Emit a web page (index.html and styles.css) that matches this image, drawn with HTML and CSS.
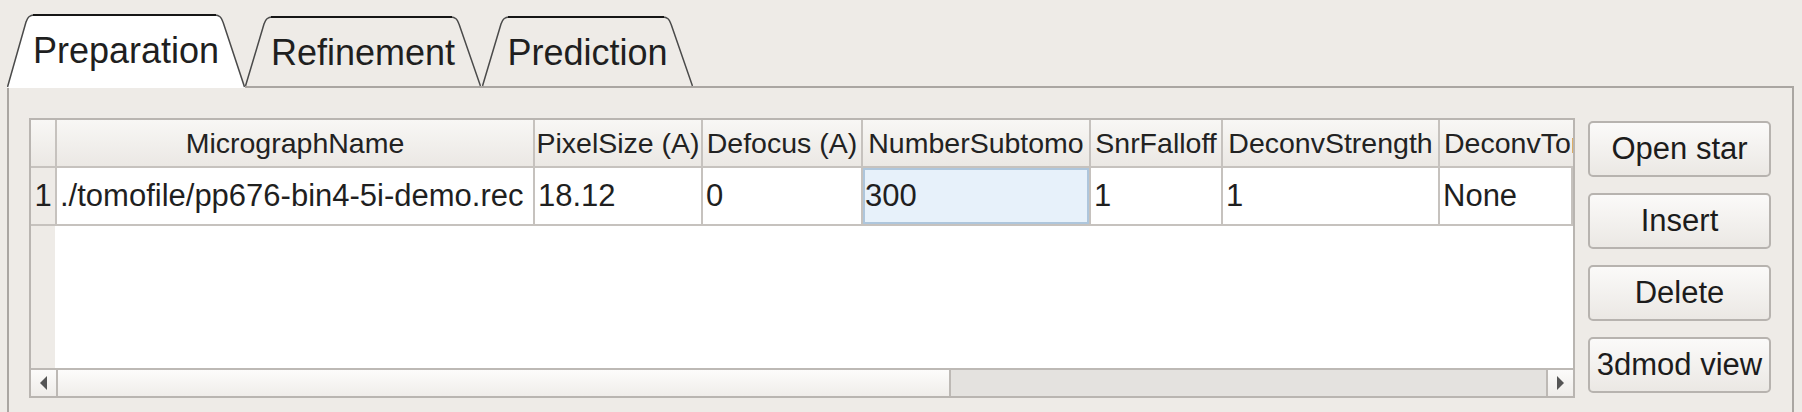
FILE: index.html
```html
<!DOCTYPE html>
<html>
<head>
<meta charset="utf-8">
<title>Preparation</title>
<link rel="stylesheet" href="styles.css">
</head>
<body>
<div class="tabbar">
  <div class="tab tab-prep">
    <svg class="tab-shape" width="238" height="74" viewBox="0 0 238 74">
      <path class="fill-sel" d="M0,74 L0.5,72 L19,8 Q21,1 27,1 L208,1 Q214,1 216,8 L237.5,72 L238,74 Z"/>
      <path class="edge" d="M0.5,73 L19,8 Q21,1 27,1 L208,1 Q214,1 216,8 L237.5,73"/>
      <path class="edge-top" d="M26,1 L209,1"/>
    </svg>
    <span class="tab-label">Preparation</span>
  </div>
  <div class="tab tab-ref">
    <svg class="tab-shape" width="236" height="74" viewBox="0 0 236 74">
      <path class="fill" d="M0.5,72 L19,10 Q21,3 27,3 L206,3 Q212,3 214,10 L235.5,72 Z"/>
      <path class="edge" d="M0.5,72 L19,10 Q21,3 27,3 L206,3 Q212,3 214,10 L235.5,72"/>
      <path class="edge-top" d="M26,3 L207,3"/>
    </svg>
    <span class="tab-label tab-label-low">Refinement</span>
  </div>
  <div class="tab tab-pred">
    <svg class="tab-shape" width="211" height="74" viewBox="0 0 211 74">
      <path class="fill" d="M0.5,72 L19,10 Q21,3 27,3 L181,3 Q187,3 189,10 L210.5,72 Z"/>
      <path class="edge" d="M0.5,72 L19,10 Q21,3 27,3 L181,3 Q187,3 189,10 L210.5,72"/>
      <path class="edge-top" d="M26,3 L182,3"/>
    </svg>
    <span class="tab-label tab-label-low">Prediction</span>
  </div>
</div>
<div class="pane">
  <div class="table">
    <div class="viewport">
      <div class="grid">
        <div class="hcell"></div>
        <div class="hcell">MicrographName</div>
        <div class="hcell">PixelSize (A)</div>
        <div class="hcell">Defocus (A)</div>
        <div class="hcell">NumberSubtomo</div>
        <div class="hcell">SnrFalloff</div>
        <div class="hcell">DeconvStrength</div>
        <div class="hcell hcell-clip">DeconvTomoName</div>

        <div class="vcell">1</div>
        <div class="cell">./tomofile/pp676-bin4-5i-demo.rec</div>
        <div class="cell">18.12</div>
        <div class="cell">0</div>
        <div class="cell cell-edit">300</div>
        <div class="cell">1</div>
        <div class="cell">1</div>
        <div class="cell">None</div>
      </div>
    </div>
    <div class="hscroll">
      <div class="sb-btn sb-left">
        <svg width="7" height="14" viewBox="0 0 7 14"><path class="arrow" d="M7,0 L7,14 L0,7 Z"/></svg>
      </div>
      <div class="sb-handle"></div>
      <div class="sb-trough"></div>
      <div class="sb-btn sb-right">
        <svg width="7" height="14" viewBox="0 0 7 14"><path class="arrow" d="M0,0 L0,14 L7,7 Z"/></svg>
      </div>
    </div>
  </div>
  <div class="buttons">
    <button class="btn" type="button">Open star</button>
    <button class="btn" type="button">Insert</button>
    <button class="btn" type="button">Delete</button>
    <button class="btn" type="button">3dmod view</button>
  </div>
</div>
</body>
</html>
```
FILE: styles.css
```css
html, body {
  margin: 0;
  padding: 0;
}
html {
  background: #eeebe7;
  overflow: hidden;
}
body {
  width: 1802px;
  height: 412px;
  overflow: hidden;
  box-sizing: border-box;
  padding: 14px 0 0 7px;
  font-family: "Liberation Sans", Arial, sans-serif;
  color: #1f1f1f;
}

/* Tabs */
.tabbar {
  display: flex;
  height: 74px;
  margin-bottom: -2px;
  position: relative;
  z-index: 1;
}
.tab {
  position: relative;
  height: 74px;
  display: flex;
  align-items: center;
  justify-content: center;
  font-size: 36px;
  flex: none;
}
.tab-prep { width: 238px; }
.tab-ref { width: 236px; }
.tab-pred { width: 211px; margin-left: 1px; }
.tab-shape {
  position: absolute;
  left: 0;
  top: 0;
}
.tab-label {
  position: relative;
  padding-bottom: 1px;
  white-space: nowrap;
}
.tab-label-low {
  padding-top: 4px;
  padding-bottom: 0;
}
.fill-sel { fill: #ffffff; }
.fill { fill: #eeebe7; }
.edge {
  fill: none;
  stroke: #4a4a4a;
  stroke-width: 1.5;
}
.edge-top {
  fill: none;
  stroke: #161616;
  stroke-width: 2;
}

/* Pane */
.pane {
  display: flex;
  align-items: flex-start;
  gap: 13px;
  width: 1787px;
  height: 340px;
  box-sizing: border-box;
  border: 2px solid #aaa6a2;
  border-bottom: none;
  padding: 30px 21px 0 20px;
}

/* Table */
.table {
  flex: none;
  width: 1546px;
  height: 280px;
  box-sizing: border-box;
  border: 2px solid #b9b5b1;
  background: #ffffff;
  display: flex;
  flex-direction: column;
  overflow: hidden;
}
.viewport {
  flex: 1;
  overflow: hidden;
  background: linear-gradient(to right, #eeebe7 24px, #ffffff 24px);
}
.grid {
  display: grid;
  grid-template-columns: 26px 478px 168px 160px 228px 132px 217px 133px;
  grid-template-rows: 48px 58px;
  width: max-content;
}
.hcell, .vcell, .cell {
  box-sizing: border-box;
  border-right: 2px solid #c6c2be;
  border-bottom: 2px solid #c6c2be;
  display: flex;
  align-items: center;
  white-space: nowrap;
  overflow: hidden;
}
.hcell {
  justify-content: center;
  font-size: 28.5px;
  color: #222222;
  background: linear-gradient(#f8f7f5, #ebe8e4);
}
.hcell-clip {
  justify-content: flex-start;
  padding-left: 4px;
  border-right: none;
}
.vcell {
  justify-content: center;
  font-size: 31px;
  background: #eeebe7;
}
.cell {
  font-size: 31px;
  padding-left: 3px;
  background: #ffffff;
}
.cell-edit {
  padding-left: 2px;
  background: #e7f1fa;
  box-shadow: inset 0 0 0 2px #aec6dc;
}

/* Scrollbar */
.hscroll {
  flex: none;
  display: flex;
  height: 28px;
  box-sizing: border-box;
  border-top: 2px solid #bdb9b5;
}
.sb-btn {
  flex: none;
  width: 27px;
  box-sizing: border-box;
  display: flex;
  align-items: center;
  justify-content: center;
  background: linear-gradient(#fcfbfa, #efece9);
}
.sb-left { border-right: 2px solid #bdb9b5; }
.sb-right { border-left: 2px solid #bdb9b5; }
.arrow { fill: #555555; }
.sb-handle {
  flex: none;
  width: 893px;
  box-sizing: border-box;
  border-right: 2px solid #bdb9b5;
  background: linear-gradient(#fdfcfb, #f0edea);
}
.sb-trough {
  flex: 1;
  background: #e4e2df;
}

/* Buttons */
.buttons {
  flex: none;
  width: 183px;
  display: flex;
  flex-direction: column;
  gap: 16px;
  margin-top: 3px;
}
.btn {
  height: 56px;
  margin: 0;
  padding: 0;
  box-sizing: border-box;
  border: 2px solid #b7b3af;
  border-radius: 5px;
  background: linear-gradient(#fbfaf9, #ebe8e4);
  font-family: "Liberation Sans", Arial, sans-serif;
  font-size: 31px;
  color: #1c1c1c;
  display: flex;
  align-items: center;
  justify-content: center;
}
```
